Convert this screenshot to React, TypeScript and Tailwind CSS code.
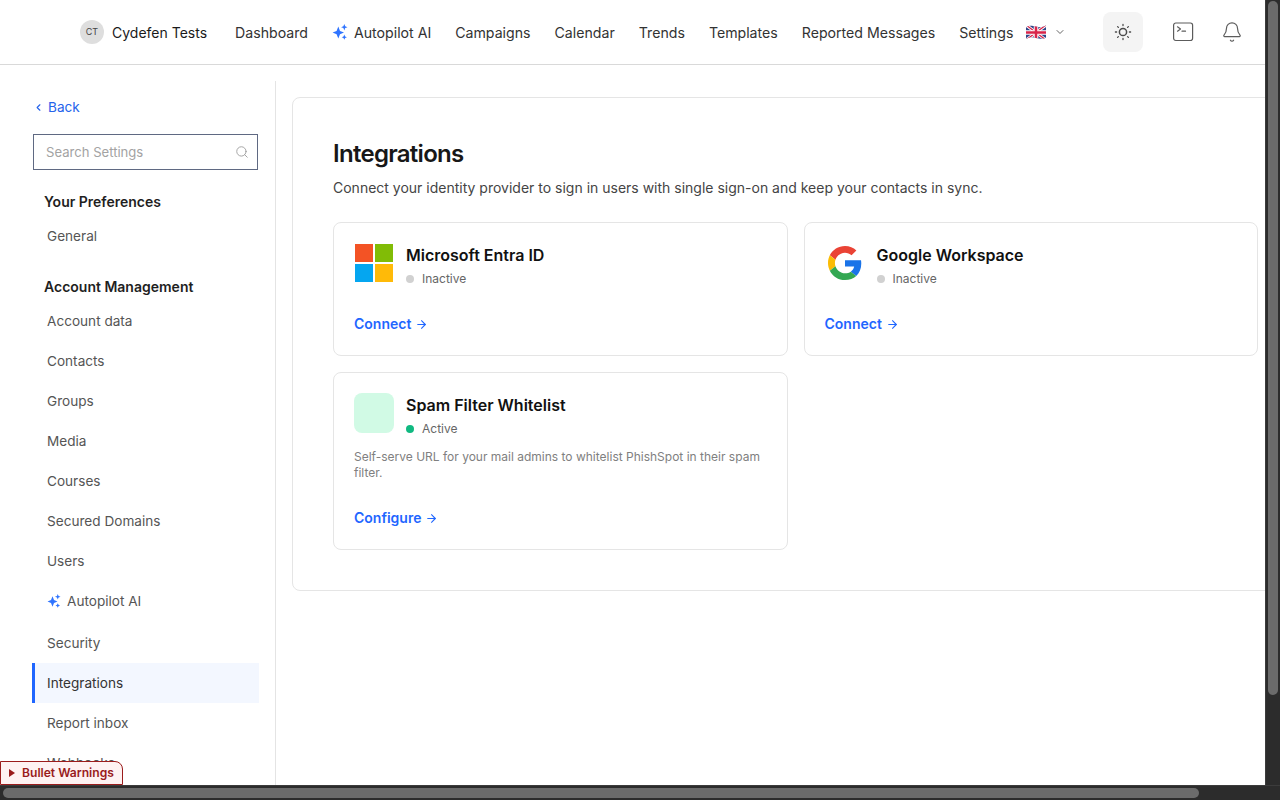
import React from "react";
import { ChevronDown, ChevronLeft, ArrowRight, Search, Bell } from "lucide-react";

const Sparkles = ({ size = 16 }: { size?: number }) => (
  <svg width={size} height={size} viewBox="0 0 16 16" fill="#2f74ff">
    <path d="M6.300 2.600 8 6.900l4 1.700-4 1.700-1.700 4.300-1.700-4.300L.6 8.600l4-1.700z" />
    <path d="M12.300 0l.9 2.300 2.300.9-2.300.9-.9 2.300-.9-2.300-2.300-.9 2.300-.9z" />
    <path d="M12.300 10.600l.8 1.800 1.800.8-1.800.8-.8 1.800-.8-1.800-1.800-.8 1.800-.8z" />
  </svg>
);

const UkFlag = () => (
  <svg width="20" height="15" viewBox="0 0 20 15">
    <defs>
      <clipPath id="wave">
        <path d="M0 2.400C3.500 .2 6.500 .6 10 1.600S16.500 2.600 20 .6V12.400C16.500 14.400 13.500 14 10 13S3.500 12 0 14z" />
      </clipPath>
    </defs>
    <g clipPath="url(#wave)">
      <rect width="20" height="15" fill="#2f4488" />
      <path d="M0 0 20 15M20 0 0 15" stroke="#fff" strokeWidth="3" />
      <path d="M0 0 20 15M20 0 0 15" stroke="#d8244a" strokeWidth="1.300" />
      <path d="M10 0V15M0 7.500H20" stroke="#fff" strokeWidth="4.500" />
      <path d="M10 0V15M0 7.500H20" stroke="#d8244a" strokeWidth="2.600" />
    </g>
  </svg>
);

const SunIcon = () => (
  <svg width="18" height="18" viewBox="0 0 18 18" fill="none" stroke="#4a4a4a" strokeLinecap="round">
    <circle cx="9" cy="9" r="3.600" strokeWidth="1.500" />
    <path d="M9 1.400v1.200M9 15.400v1.200M1.400 9h1.200M15.400 9h1.200M3.600 3.600l.8.8M13.600 13.600l.8.8M3.600 14.400l.8-.8M13.600 4.400l.8-.8" strokeWidth="1.300" />
  </svg>
);

const TerminalIcon = () => (
  <svg width="22" height="20" viewBox="0 0 22 20" fill="none" stroke="#5c5c5c" strokeLinecap="round" strokeLinejoin="round">
    <rect x="1.600" y="1" width="19" height="17.500" rx="2.200" strokeWidth="1.200" />
    <path d="M5.500 4.800 8.500 7 5.500 9.200M10 9.200h3.500" strokeWidth="1.200" />
  </svg>
);

const MicrosoftLogo = () => (
  <div className="grid h-10 w-10 shrink-0 grid-cols-2 gap-[2px] p-[1px]">
    <div className="bg-[#f35325]" />
    <div className="bg-[#81bc06]" />
    <div className="bg-[#05a6f0]" />
    <div className="bg-[#ffba08]" />
  </div>
);

const GoogleLogo = () => (
  <div className="flex h-10 w-10 shrink-0 items-center justify-center">
    <svg width="34" height="34" viewBox="0 0 48 48">
      <path fill="#ea4335" d="M24 9.500c3.540 0 6.710 1.220 9.210 3.600l6.850-6.850C35.900 2.380 30.470 0 24 0 14.620 0 6.510 5.380 2.560 13.220l7.980 6.190C12.430 13.720 17.740 9.500 24 9.500z" />
      <path fill="#1a73e8" d="M46.980 24.550c0-1.570-.15-3.090-.38-4.550H24v9.020h12.940c-.58 2.960-2.260 5.480-4.780 7.180l7.730 6c4.510-4.180 7.090-10.360 7.090-17.650z" />
      <path fill="#fbbc05" d="M10.530 28.590c-.48-1.450-.76-2.990-.76-4.590s.27-3.140.76-4.590l-7.980-6.190C.92 16.460 0 20.120 0 24c0 3.880.92 7.540 2.560 10.780l7.970-6.190z" />
      <path fill="#34a853" d="M24 48c6.480 0 11.930-2.130 15.890-5.810l-7.730-6c-2.150 1.450-4.920 2.300-8.160 2.300-6.260 0-11.570-4.220-13.470-9.910l-7.980 6.190C6.510 42.620 14.620 48 24 48z" />
    </svg>
  </div>
);

const navItems = ["Campaigns", "Calendar", "Trends", "Templates", "Reported Messages"];

const Header = () => (
  <header className="flex h-[65px] shrink-0 items-center border-b border-[#d9d9d9] pl-[80px]">
    <div className="flex h-6 w-6 items-center justify-center rounded-full bg-[#dedede] text-[9px] text-[#444]">CT</div>
    <span className="ml-2 text-[14px] font-normal text-[#1a1a1a]">Cydefen Tests</span>
    <nav className="ml-7 flex items-center gap-6 pt-[1px] text-[14.150px] text-[#333]">
      <a>Dashboard</a>
      <a className="flex items-center gap-[6px]">
        <Sparkles />
        Autopilot AI
      </a>
      {navItems.map((n) => (
        <a key={n}>{n}</a>
      ))}
      <a>Settings</a>
    </nav>
    <div className="ml-[13px] flex items-center">
      <UkFlag />
      <ChevronDown size={12} className="ml-[8px] text-[#666]" />
    </div>
    <button className="ml-[37px] flex h-10 w-10 items-center justify-center rounded-lg bg-[#f4f4f4]">
      <SunIcon />
    </button>
    <div className="ml-[29px]">
      <TerminalIcon />
    </div>
    <Bell size={22} strokeWidth={1.300} className="ml-[27px] text-[#5c5c5c]" />
  </header>
);

const accountItems = ["Account data", "Contacts", "Groups", "Media", "Courses", "Secured Domains", "Users"];

const SideItem = ({ label }: { label: string }) => (
  <div className="flex h-10 items-center pl-[15px] text-[13.600px] text-[#555]">{label}</div>
);

const Sidebar = () => (
  <aside className="mt-4 flex w-[276px] shrink-0 flex-col overflow-hidden border-r border-[#e4e4e4] pl-8 pr-4 pt-4">
    <a className="flex h-5 items-center gap-[4px] pl-[1px] text-[13.600px] text-[#2563eb]">
      <ChevronLeft size={11} strokeWidth={2.500} />
      Back
    </a>
    <div className="ml-[1px] mt-[17px] flex h-9 w-[225px] shrink-0 items-center justify-between border border-[#5f6982] pl-3 pr-[8px]">
      <span className="pt-[2px] text-[13.100px] text-[#a3a3a3]">Search Settings</span>
      <Search size={14} strokeWidth={1.500} className="text-[#999]" />
    </div>
    <div className="mt-[22px] h-5 pl-3 text-[14px] font-semibold leading-5 text-[#1f1f1f]">Your Preferences</div>
    <div className="mt-[4px]">
      <SideItem label="General" />
    </div>
    <div className="mt-[21px] h-5 pl-3 text-[14px] font-semibold leading-5 text-[#1f1f1f]">Account Management</div>
    <div className="mt-1 flex flex-col">
      {accountItems.map((i) => (
        <SideItem key={i} label={i} />
      ))}
      <div className="flex h-10 items-center gap-[6px] pl-[15px] text-[13.600px] text-[#555]">
        <Sparkles size={14} />
        Autopilot AI
      </div>
      <div className="mt-[2px]">
        <SideItem label="Security" />
      </div>
      <div className="flex h-10 items-center border-l-[3px] border-[#1f66ff] bg-[#f3f7ff] pl-3 text-[13.600px] text-[#333]">
        Integrations
      </div>
      <SideItem label="Report inbox" />
      <SideItem label="Webhooks" />
    </div>
  </aside>
);

const Status = ({ active }: { active?: boolean }) => (
  <div className="mt-1 flex items-center gap-2 text-[12px] leading-4 text-[#666]">
    <span className={active ? "h-2 w-2 rounded-full bg-[#10b981]" : "h-2 w-2 rounded-full bg-[#d1d1d1]"} />
    {active ? "Active" : "Inactive"}
  </div>
);

const CardLink = ({ label }: { label: string }) => (
  <a className="mt-[27px] flex items-center gap-1 text-[14px] font-semibold leading-5 text-[#1f66ff]">
    {label}
    <ArrowRight size={13} strokeWidth={2} />
  </a>
);

const Card = ({ icon, title, active, desc, link }: { icon: React.ReactNode; title: string; active?: boolean; desc?: string; link: string }) => (
  <div className="rounded-lg border border-[#e5e5e5] bg-white px-5 pb-[21px] pt-5">
    <div className="flex items-start gap-3">
      {icon}
      <div className="min-w-0">
        <div className="text-[16px] font-semibold leading-6 text-[#111]">{title}</div>
        <Status active={active} />
      </div>
    </div>
    {desc && <p className="mt-3 text-[12px] leading-4 text-[#808080]">{desc}</p>}
    <CardLink label={link} />
  </div>
);

const Content = () => (
  <main className="ml-4 mt-8 h-[494px] w-[1007px] shrink-0 rounded-lg border border-[#e5e5e5] bg-white px-10 pt-10">
    <h1 className="text-[24px] font-semibold leading-8 tracking-[-0.03em] text-[#171717]">Integrations</h1>
    <p className="mt-2 text-[14px] leading-5 text-[#444]">
      Connect your identity provider to sign in users with single sign-on and keep your contacts in sync.
    </p>
    <div className="mt-6 grid w-[925px] grid-cols-2 items-start gap-4">
      <Card icon={<MicrosoftLogo />} title="Microsoft Entra ID" link="Connect" />
      <Card icon={<GoogleLogo />} title="Google Workspace" link="Connect" />
      <Card
        icon={<div className="h-10 w-10 shrink-0 rounded-lg bg-[#d1fae5]" />}
        title="Spam Filter Whitelist"
        active
        desc="Self-serve URL for your mail admins to whitelist PhishSpot in their spam filter."
        link="Configure"
      />
    </div>
  </main>
);

export default function App() {
  return (
    <div className="relative flex h-screen flex-col overflow-hidden bg-[#2c2c2c] font-['Inter',sans-serif]">
      <div className="flex min-h-0 flex-1">
        <div className="flex min-w-0 flex-1 flex-col overflow-hidden bg-white">
          <Header />
          <div className="flex min-h-0 flex-1">
            <Sidebar />
            <Content />
          </div>
        </div>
        <div className="w-[15px] shrink-0 border-l border-[#3c3c3c] pl-[2px] pr-[2px] pt-[1px]">
          <div className="h-[694px] w-[10px] rounded-md bg-[#6b6b6b]" />
        </div>
      </div>
      <div className="h-[15px] shrink-0 border-t border-[#3c3c3c] pl-[3px] pt-[2px]">
        <div className="h-[10px] w-[1196px] rounded-md bg-[#6b6b6b]" />
      </div>
      <div className="absolute bottom-[15px] left-0 flex h-6 w-[123px] items-center gap-[7px] rounded-tr-lg border border-[#9b1c1c] bg-[#fef2f2] pl-2 text-[12.100px] font-semibold text-[#991b1b]">
        <span className="h-0 w-0 border-y-[4px] border-l-[6px] border-y-transparent border-l-[#991b1b]" />
        Bullet Warnings
      </div>
    </div>
  );
}
